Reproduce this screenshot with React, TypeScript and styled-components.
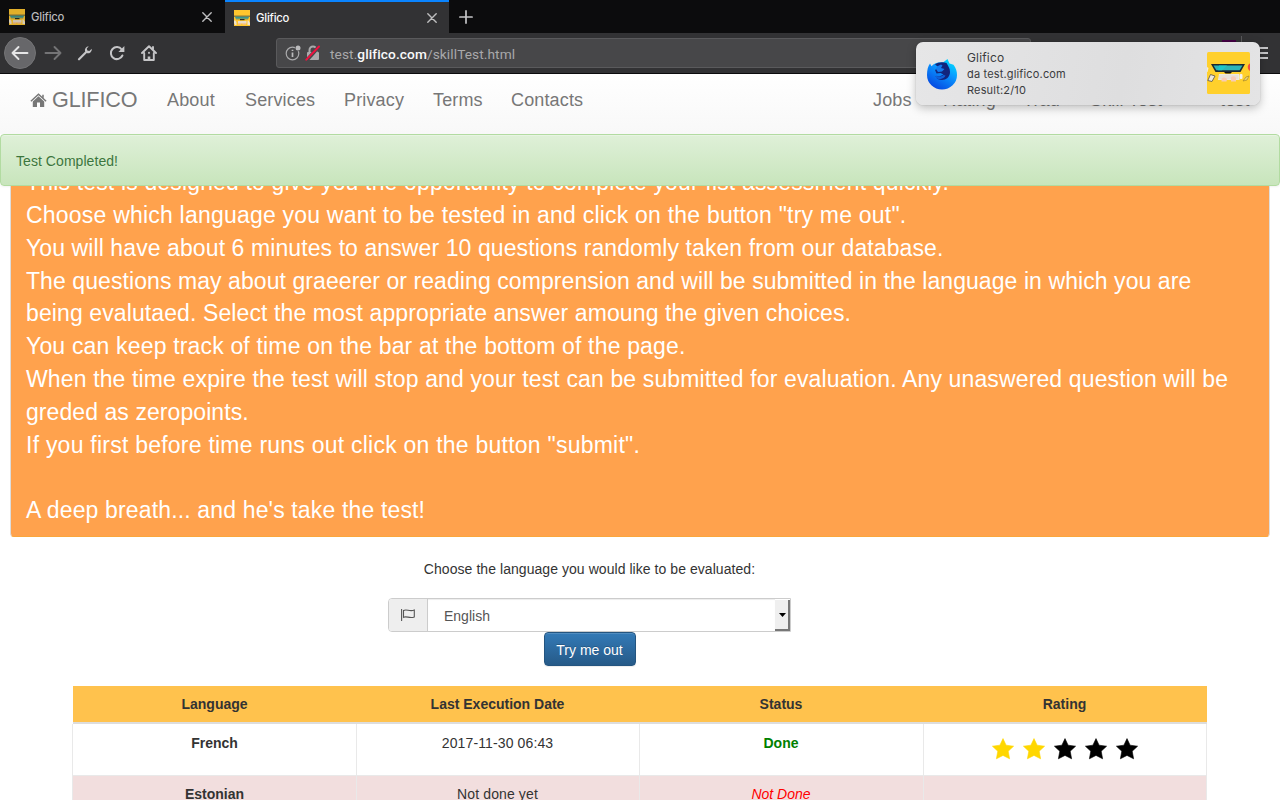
import React from "react";
import styled, { createGlobalStyle } from "styled-components";

const Global = createGlobalStyle`
  * { box-sizing: border-box; }
  html, body { margin: 0; height: 100%; overflow: hidden; background: #fff; }
  body { font: 14px/20px "Liberation Sans", Arial, sans-serif; color: #333; }
`;

const Screen = styled.div`
  position: relative;
  width: 1280px;
  height: 800px;
  overflow: hidden;
  display: flex;
  flex-direction: column;
  background: #fff;
`;

const TabStrip = styled.div`
  display: flex;
  flex: none;
  height: 33px;
  background: #0c0c0d;
`;

const Tab = styled.div<{ $active?: boolean }>`
  display: flex;
  align-items: center;
  width: ${(p) => (p.$active ? 224 : 225)}px;
  padding: ${(p) => (p.$active ? "0 12px 0 9px" : "1px 13px 0 9px")};
  border-top: ${(p) => (p.$active ? "2px solid #0a84ff" : "0")};
  background: ${(p) => (p.$active ? "#323234" : "#0c0c0d")};
  color: ${(p) => (p.$active ? "#f9f9fa" : "#b8b8ba")};
  font: 500 11.3px/16px Inter, sans-serif;
`;

const TabTitle = styled.span`
  flex: 1;
  margin-left: 6px;
  letter-spacing: -0.2px;
`;

const NewTab = styled.div`
  display: flex;
  align-items: center;
  padding-left: 10px;
`;

const Toolbar = styled.div`
  display: flex;
  flex: none;
  align-items: center;
  height: 41px;
  padding: 0 12px 0 4px;
  background: #323234;
  border-bottom: 1px solid #0c0c0d;
`;

const BackButton = styled.div`
  display: flex;
  align-items: center;
  justify-content: center;
  width: 32px;
  height: 32px;
  border-radius: 50%;
  background: #67676a;
  border: 1px solid #747476;
`;

const ToolIcon = styled.div<{ $ml: number }>`
  display: flex;
  width: 18px;
  margin-left: ${(p) => p.$ml}px;
`;

const AddressBar = styled.div`
  display: flex;
  align-items: center;
  width: 755px;
  height: 30px;
  margin-left: 117px;
  padding: 0 8px;
  border: 1px solid #5a5a5c;
  border-radius: 3px;
  background: #474749;
  color: #a9a9ab;
`;

const Url = styled.span`
  flex: 1;
  margin-left: 7px;
  padding-top: 1px;
  font: 13.7px/20px Roboto, sans-serif;
  letter-spacing: 0.09px;
  b { color: #f9f9fa; font-weight: 500; }
`;

const ToolbarEnd = styled.div`
  display: flex;
  flex: 1;
  align-items: center;
  justify-content: flex-end;
`;

const Extension = styled.div`
  width: 14px;
  height: 26px;
  margin-right: 5px;
  background: #440044;
`;

const Divider = styled.div`
  width: 1px;
  height: 34px;
  margin-right: 13px;
  background: #59595b;
`;

const Nav = styled.nav`
  display: flex;
  flex: none;
  height: 60px;
  padding: 0 30px;
  background: linear-gradient(#fff, #f8f8f8);
  color: #777;
  font-size: 18px;
  line-height: 20px;
`;

const Brand = styled.div`
  display: flex;
  align-items: center;
  width: 137px;
  padding-bottom: 8px;
  font-size: 21.6px;
  letter-spacing: -0.15px;
  svg { margin: 1px 5px 0 0; }
`;

const NavLink = styled.a<{ $w: number }>`
  width: ${(p) => p.$w}px;
  padding-top: 16px;
  letter-spacing: 0.15px;
  white-space: nowrap;
`;

const NavEnd = styled.div`
  display: flex;
  margin-left: auto;
`;

const Alert = styled.div`
  flex: none;
  height: 52px;
  padding: 16px 15px;
  border: 1px solid #b2dba1;
  border-radius: 4px;
  background: linear-gradient(#dff0d8, #c8e5bc);
  box-shadow: inset 0 1px 0 rgba(255, 255, 255, 0.25), 0 1px 2px rgba(0, 0, 0, 0.05);
  color: #3c763d;
  letter-spacing: 0.06px;
  text-shadow: 0 1px 0 rgba(255, 255, 255, 0.2);
`;

const Content = styled.main`
  flex: 1;
  min-height: 0;
  overflow: hidden;
`;

const Instructions = styled.section`
  height: 372px;
  margin: -21px 10px 0;
  padding: 0 15px;
  border: 1px solid #faa63c;
  border-left-color: #ddd;
  border-right-color: #ddd;
  border-radius: 4px;
  background: #ffa24d;
  color: #fff;
  font-size: 23px;
  line-height: 32.857px;
  white-space: nowrap;
`;

const Line = styled.div<{ $ls: number }>`
  height: 32.857px;
  letter-spacing: ${(p) => p.$ls}px;
`;

const Chooser = styled.form`
  display: flex;
  flex-direction: column;
  align-items: center;
  width: 403px;
  margin: 22px 0 20px 388px;
`;

const Prompt = styled.label`
  margin-bottom: 19px;
  letter-spacing: 0.055px;
`;

const SelectGroup = styled.div`
  display: flex;
  width: 403px;
  height: 34px;
  border: 1px solid #ccc;
  border-radius: 4px 0 0 4px;
  overflow: hidden;
`;

const Addon = styled.div`
  display: flex;
  align-items: center;
  justify-content: center;
  width: 39px;
  background: #eee;
  border-right: 1px solid #ccc;
`;

const SelectValue = styled.div`
  flex: 1;
  padding: 7px 16px;
  color: #555;
  box-shadow: inset 0 1px 1px rgba(0, 0, 0, 0.075);
`;

const SelectArrow = styled.div`
  display: flex;
  align-items: center;
  justify-content: center;
  width: 15px;
  margin-top: 1px;
  background: #efefef;
  border-right: 2px solid #777;
  border-bottom: 2px solid #777;
  svg { margin-left: 1px; }
`;

const TryButton = styled.button`
  width: 92px;
  height: 34px;
  padding: 1px 0 0;
  border: 1px solid #245580;
  border-radius: 4px;
  background: linear-gradient(#337ab7, #265a88);
  box-shadow: inset 0 1px 0 rgba(255, 255, 255, 0.15), 0 1px 1px rgba(0, 0, 0, 0.075);
  color: #fff;
  font: 14px/20px "Liberation Sans", Arial, sans-serif;
  text-shadow: 0 -1px 0 rgba(0, 0, 0, 0.2);
`;

const Results = styled.div`
  width: 1135px;
  margin-left: 72px;
  text-align: center;
`;

const Row = styled.div<{ $kind: "head" | "plain" | "danger" }>`
  display: grid;
  grid-template-columns: ${(p) => (p.$kind === "head" ? 283 : 285)}px 283px 284px 283px;
  height: ${(p) => (p.$kind === "head" ? 38 : 52)}px;
  margin-left: ${(p) => (p.$kind === "head" ? 1 : 0)}px;
  background: ${(p) => ({ head: "#ffc24d", plain: "#fff", danger: "#f2dede" }[p.$kind])};
  border-bottom: ${(p) => (p.$kind === "head" ? "2px solid #ddd" : "1px solid #e9e9e9")};
  font-weight: ${(p) => (p.$kind === "head" ? 700 : 400)};
  line-height: ${(p) => (p.$kind === "plain" ? 20 : 18)}px;
`;

const HeadCell = styled.div`
  padding-top: 9px;
`;

const Cell = styled.div<{ $tone?: "strong" | "done" | "missing" }>`
  padding: 9px 1px 0 0;
  border-right: 1px solid #e9e9e9;
  color: ${(p) => (p.$tone === "done" ? "#008000" : p.$tone === "missing" ? "#ff0000" : "#333")};
  font-weight: ${(p) => (p.$tone === "strong" || p.$tone === "done" ? 700 : 400)};
  font-style: ${(p) => (p.$tone === "missing" ? "italic" : "normal")};
  letter-spacing: ${(p) => (p.$tone ? 0 : 0.12)}px;
  &:first-child { border-left: 1px solid #e9e9e9; padding-right: 0; }
`;

const Stars = styled.div`
  display: flex;
  justify-content: center;
  gap: 9px;
  padding-top: 5px;
`;

const Notification = styled.aside`
  position: absolute;
  top: 42px;
  left: 916px;
  display: flex;
  align-items: center;
  width: 344px;
  height: 63px;
  padding: 0 10px 0 11px;
  border-radius: 7px;
  background: linear-gradient(100deg, #e6e6e7, #dededf 60%, #e4e4e5);
  box-shadow: 0 0 1px rgba(0, 0, 0, 0.35), 0 3px 10px rgba(0, 0, 0, 0.25);
`;

const NoticeText = styled.div`
  flex: 1;
  margin-left: 10px;
  color: #3b3b3e;
  font: 11px/16px Inter, sans-serif;
  letter-spacing: 0.16px;
`;

const NoticeTitle = styled.div`
  font-size: 12px;
`;

const Favicon = ({ dim }: { dim?: boolean }) => (
  <svg width="16" height="16" viewBox="0 0 16 16" opacity={dim ? 0.88 : 1}>
    <rect width="16" height="16" fill="#ffc62e" />
    <rect y="5.600" width="16" height="1.200" fill="#6d6a45" />
    <path d="M1 6.700h14l-.7 2H1.700z" fill="#379794" />
    <path d="M2 8.700h12v.700H2z" fill="#6f8a66" />
    <path d="M6 9h4.500v1.200H6z" fill="#272c28" />
    <path d="M4 11h8.500v2.500H4z" fill="#e9dcc6" />
    <path d="M0 10.500h1.500l1 2V15H1l-1-2zM13.500 10.500h1L16 13v2h-2.500z" fill="#efe3cc" />
    <path d="M4 13h3v1.500H4zM8.500 13h3.500v1.500H8.500z" fill="#f3c39c" />
  </svg>
);

const Cross = () => (
  <svg width="10" height="10" viewBox="0 0 10 10" stroke="#bebebf" strokeWidth="1.4" strokeLinecap="round">
    <path d="M.8.800 9.200 9.200M9.200.8.800 9.200" />
  </svg>
);

const Arrow = ({ right }: { right?: boolean }) => (
  <svg width="18" height="16" viewBox="0 0 18 16" fill="none" stroke={right ? "#747476" : "#e6e6e7"} strokeWidth="1.900" strokeLinecap="round" strokeLinejoin="round">
    {right ? <path d="M1.500 8h15M10.500 2l6 6-6 6" /> : <path d="M16.500 8h-15M7.500 2l-6 6 6 6" />}
  </svg>
);

const Wrench = () => (
  <svg width="16" height="16" viewBox="0 0 16 16">
    <path d="M2 14.300 9 7.300" stroke="#c5c5c7" strokeWidth="2.200" strokeLinecap="round" />
    <path d="M11.800 1.200a4 4 0 0 0-3.700 5.300l1.500 1.600a4 4 0 0 0 5.200-4.300l-2.500 2.300-2-.6-.5-2z" fill="#c5c5c7" />
  </svg>
);

const Reload = () => (
  <svg width="16" height="16" viewBox="0 0 16 16">
    <path d="M12.700 4.500A6 6 0 1 0 13.400 10.500" fill="none" stroke="#c5c5c7" strokeWidth="2" strokeLinecap="round" />
    <path d="M15.400 1v6H9.400z" fill="#c5c5c7" />
  </svg>
);

const HomeOutline = () => (
  <svg width="16" height="16" viewBox="0 0 16 16" fill="none" stroke="#c5c5c7" strokeWidth="1.900" strokeLinejoin="round" strokeLinecap="round">
    <path d="M1 8l7-6.800L15 8M3.200 8v7h9.600V8" />
    <path d="M8 11.500V15" strokeWidth="2.600" strokeLinecap="butt" />
    <path d="M12 2v2M8 7.800v.1" />
  </svg>
);

const SiteInfo = () => (
  <svg width="17" height="16" viewBox="0 0 17 16">
    <circle cx="7.500" cy="8.500" r="6.300" fill="none" stroke="#aaaaac" strokeWidth="1.200" />
    <path d="M7.500 7.500v4.500M7.500 4.800v1.200" stroke="#bbbbbd" strokeWidth="1.700" />
    <circle cx="13" cy="3" r="3.200" fill="#474749" />
    <circle cx="13" cy="3" r="2.500" fill="#bbbbbd" />
  </svg>
);

const BrokenLock = () => (
  <svg width="16" height="16" viewBox="0 0 16 16">
    <path d="M4.500 7V5a3.500 3.500 0 0 1 7 0v2" fill="none" stroke="#aaaaac" strokeWidth="2" />
    <rect x="2" y="7" width="12" height="8" rx="1" fill="#aaaaac" />
    <path d="M2.500 14.500 14 1.500" stroke="#474749" strokeWidth="3.600" />
    <path d="M1.300 14.700 14 1.500" stroke="#f0103f" strokeWidth="1.900" strokeLinecap="round" />
  </svg>
);

const HouseGlyph = () => (
  <svg width="17" height="15" viewBox="0 0 17 15" fill="#777">
    <path d="M8.500 3.300 14.200 8.500V14H10V9.500H7V14H2.800V8.500z" />
    <path d="M.9 8.200 8.500 1.200l7.600 7M13 1.800v3" fill="none" stroke="#777" strokeWidth="1.500" />
  </svg>
);

const FlagGlyph = () => (
  <svg width="14" height="14" viewBox="0 0 14 14" fill="none" stroke="#555" strokeWidth="1.100">
    <path d="M.6 1v12M2.500 2.500c3-2 6 1.500 10.800-.5v7c-4.800 2-7.800-1.500-10.800.3z" />
  </svg>
);

const Star = ({ on }: { on: boolean }) => (
  <svg width="22" height="22" viewBox="0 0 22 22">
    <path
      d="M11 .6 14.100 7.200 21.600 8.200 16.200 13.200 17.600 20.800 11 17.400 4.400 20.800 5.800 13.200.4 8.200 7.900 7.200z"
      fill={on ? "#ffd700" : "#000"}
      stroke={on ? "#ffd700" : "#000"}
      strokeWidth=".6"
      strokeLinejoin="round"
    />
  </svg>
);

const FirefoxLogo = () => (
  <svg width="30" height="32" viewBox="0 0 30 32">
    <defs>
      <linearGradient id="ff" x1="0.900" y1="0" x2="0.300" y2="1">
        <stop offset="0" stopColor="#00e6ff" />
        <stop offset="0.450" stopColor="#0a96ff" />
        <stop offset="1" stopColor="#0546e0" />
      </linearGradient>
    </defs>
    <path d="M3 5.500l1.500 2.800C7 5.500 11 3.800 16 4.400L20.500 1l2 4.500 4 1.200C29 10 30 13 30 17a15 14.500 0 0 1-30 0C0 12 1 8 3 5.500z" fill="url(#ff)" />
    <path d="M8 6.500c3-2.500 8-3 11.500-1.500 1.500 3 3.500 5 3.500 9 0 5-4 8-8 8-3.500 0-5.500-1.500-6.500-4l4 .5 4-2-3-1.500-4 .5-1.500-3.500L12 9.500z" fill="#12257c" />
    <path d="M10 8.500l4-2 1.500 1-1.500 2.500 3.500 1-2.500 2.500-4 .5-2-3z" fill="#137bef" />
    <path d="M9 17.500c2 1.500 5 1.500 7.500-.5l2 .5c-1 3-6 5-9.500 2.500z" fill="#0f5fd8" />
  </svg>
);

const DeskPicture = () => (
  <svg width="43" height="42" viewBox="0 0 43 42" style={{ marginBottom: 1 }}>
    <rect width="43" height="42" rx="1.500" fill="#ffd02c" />
    <path d="M4 12h34l-4.500 8h-25z" fill="#1c2a30" />
    <path d="M6.500 13.500h29l-2.900 4.800H9.400z" fill="#2bb5b8" />
    <path d="M12 13.500h8l-5 4.800h-4z" fill="#1bc7ca" />
    <path d="M17 20h8l-1.500 1.500h-5z" fill="#111" />
    <path d="M12 22h20l.5 6H11z" fill="#eee9df" />
    <path d="M12 24h19M12 26h19" stroke="#d7d2cc" strokeWidth=".6" />
    <path d="M14.500 27c1-2 4-2 5.500 0l-.5 2.500h-5zM24 25c2-1.500 5-1 5 1.500v3h-5z" fill="#f8cbb8" />
    <rect x="32.500" y="22" width="3" height="5" rx="1" fill="#f7f3eb" />
    <path d="M3.500 22.500l4.500 1.500-3 5.500L.8 28.500z" fill="#ece8df" stroke="#665f50" strokeWidth=".9" />
    <path d="M0 15l1.500 1L.5 20H0z" fill="#f5eedb" />
    <path d="M43 11.500c-3 1-3 6 0 7.500z" fill="#f44a3d" />
    <path d="M36 29l3-4 3-1-2 4z" fill="#ead37c" stroke="#a88624" strokeWidth=".7" />
  </svg>
);

const instructions: { text: string; ls: number }[] = [
  { text: "This test is designed to give you the opportunity to complete your fist assessment quickly.", ls: 0.16 },
  { text: 'Choose which language you want to be tested in and click on the button "try me out".', ls: 0.21 },
  { text: "You will have about 6 minutes to answer 10 questions randomly taken from our database.", ls: 0.093 },
  { text: "The questions may about graeerer or reading comprension and will be submitted in the language in which you are", ls: 0.075 },
  { text: "being evalutaed. Select the most appropriate answer amoung the given choices.", ls: 0.104 },
  { text: "You can keep track of time on the bar at the bottom of the page.", ls: 0.17 },
  { text: "When the time expire the test will stop and your test can be submitted for evaluation. Any unaswered question will be", ls: 0.135 },
  { text: "greded as zeropoints.", ls: 0.07 },
  { text: 'If you first before time runs out click on the button "submit".', ls: 0.235 },
  { text: "", ls: 0 },
  { text: "A deep breath... and he's take the test!", ls: 0.15 },
];

export default function App() {
  return (
    <Screen>
      <Global />
      <TabStrip>
        <Tab><Favicon dim /><TabTitle>Glifico</TabTitle><Cross /></Tab>
        <Tab $active><Favicon /><TabTitle>Glifico</TabTitle><Cross /></Tab>
        <NewTab>
          <svg width="14" height="14" viewBox="0 0 14 14" stroke="#c5c5c7" strokeWidth="1.700" strokeLinecap="round"><path d="M7 .9v12.200M.9 7h12.200" /></svg>
        </NewTab>
      </TabStrip>
      <Toolbar>
        <BackButton><Arrow /></BackButton>
        <ToolIcon $ml={8}><Arrow right /></ToolIcon>
        <ToolIcon $ml={15}><Wrench /></ToolIcon>
        <ToolIcon $ml={14}><Reload /></ToolIcon>
        <ToolIcon $ml={14}><HomeOutline /></ToolIcon>
        <AddressBar>
          <SiteInfo />
          <ToolIcon $ml={3}><BrokenLock /></ToolIcon>
          <Url>test.<b>glifico.com</b>/skillTest.html</Url>
        </AddressBar>
        <ToolbarEnd>
          <Extension />
          <Divider />
          <svg width="13" height="14" viewBox="0 0 13 14" stroke="#c5c5c7" strokeWidth="2"><path d="M0 2h13M0 7h13M0 12h13" /></svg>
        </ToolbarEnd>
      </Toolbar>
      <Nav>
        <Brand><HouseGlyph />GLIFICO</Brand>
        <NavLink $w={78}>About</NavLink>
        <NavLink $w={99}>Services</NavLink>
        <NavLink $w={89}>Privacy</NavLink>
        <NavLink $w={78}>Terms</NavLink>
        <NavLink $w={80}>Contacts</NavLink>
        <NavEnd>
          <NavLink $w={70}>Jobs</NavLink>
          <NavLink $w={80}>Rating</NavLink>
          <NavLink $w={67}>Trad</NavLink>
          <NavLink $w={130}>Skill Test</NavLink>
          <NavLink $w={30}>test</NavLink>
        </NavEnd>
      </Nav>
      <Alert>Test Completed!</Alert>
      <Content>
        <Instructions>
          {instructions.map((l, i) => <Line key={i} $ls={l.ls}>{l.text}</Line>)}
        </Instructions>
        <Chooser>
          <Prompt>Choose the language you would like to be evaluated:</Prompt>
          <SelectGroup>
            <Addon><FlagGlyph /></Addon>
            <SelectValue>English</SelectValue>
            <SelectArrow><svg width="7" height="4" viewBox="0 0 7 4"><path d="M0 0h7L3.500 4z" /></svg></SelectArrow>
          </SelectGroup>
          <TryButton type="button">Try me out</TryButton>
        </Chooser>
        <Results>
          <Row $kind="head">
            <HeadCell>Language</HeadCell>
            <HeadCell>Last Execution Date</HeadCell>
            <HeadCell>Status</HeadCell>
            <HeadCell>Rating</HeadCell>
          </Row>
          <Row $kind="plain">
            <Cell $tone="strong">French</Cell>
            <Cell>2017-11-30 06:43</Cell>
            <Cell $tone="done">Done</Cell>
            <Cell><Stars>{[1, 2, 3, 4, 5].map((n) => <Star key={n} on={n <= 2} />)}</Stars></Cell>
          </Row>
          <Row $kind="danger">
            <Cell $tone="strong">Estonian</Cell>
            <Cell>Not done yet</Cell>
            <Cell $tone="missing">Not Done</Cell>
            <Cell />
          </Row>
        </Results>
      </Content>
      <Notification>
        <FirefoxLogo />
        <NoticeText>
          <NoticeTitle>Glifico</NoticeTitle>
          <div>da test.glifico.com</div>
          <div>Result:2/10</div>
        </NoticeText>
        <DeskPicture />
      </Notification>
    </Screen>
  );
}
